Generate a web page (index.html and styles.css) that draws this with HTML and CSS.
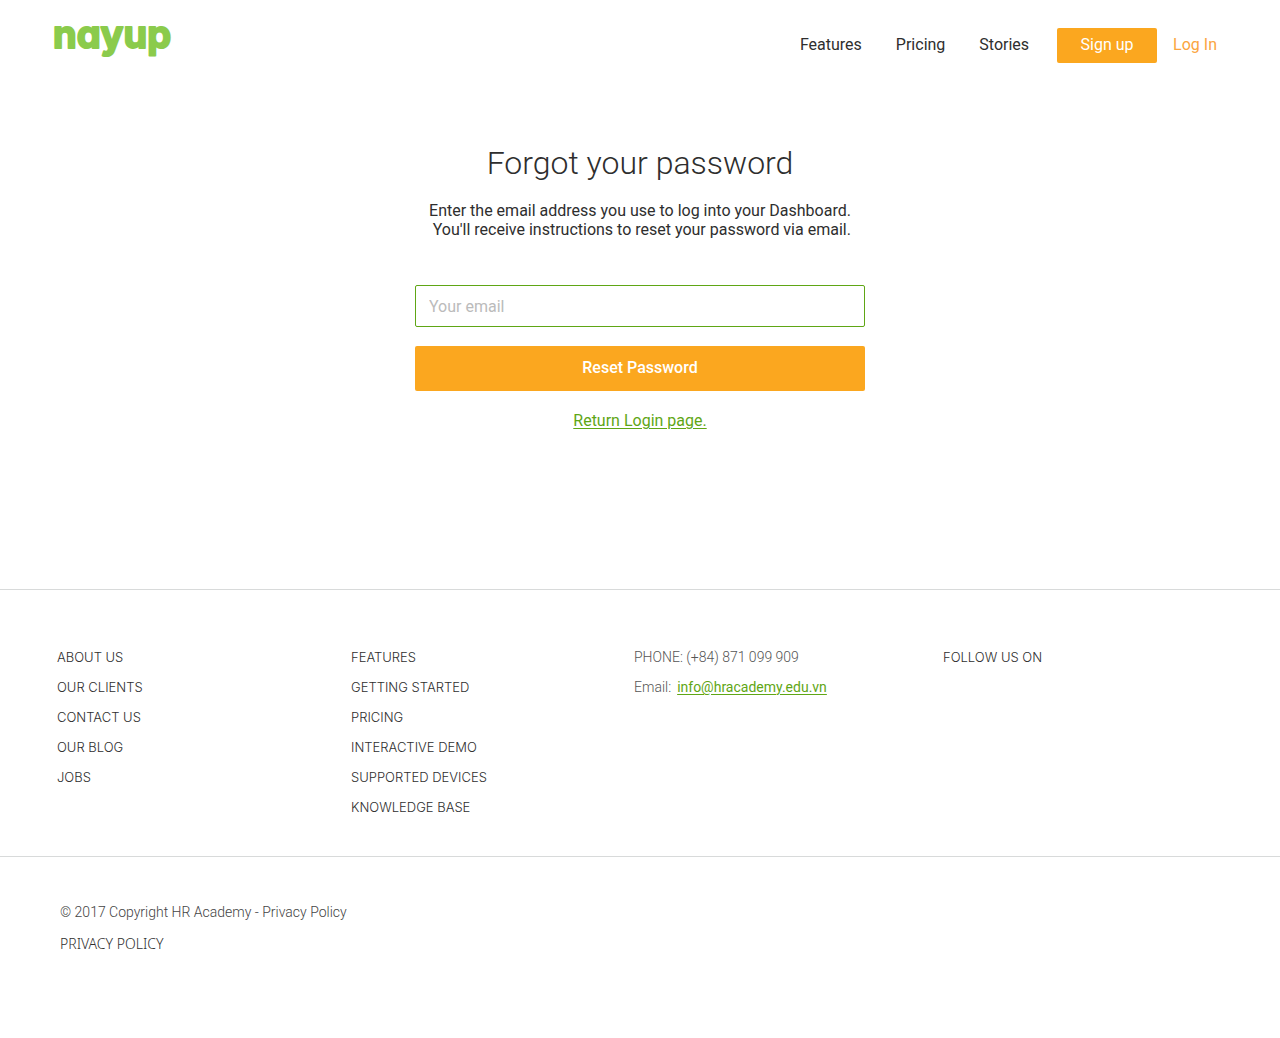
FILE: index.html
```html
<!DOCTYPE html>
<html lang="en">
<head>
<meta charset="utf-8">
<meta name="viewport" content="width=device-width, initial-scale=1">
<title>Forgot your password</title>
<link rel="stylesheet" href="styles.css">
</head>
<body>
<header class="header">
  <a class="logo" href="#">
    <svg class="logo-mark" viewBox="0 0 122 40" width="122" height="40"><text class="logo-word" x="1" y="26">nayup</text></svg>
  </a>
  <nav class="nav">
    <div class="nav-links">
      <a class="nav-link" href="#">Features</a>
      <a class="nav-link" href="#">Pricing</a>
      <a class="nav-link" href="#">Stories</a>
    </div>
    <button class="button signup" type="button">Sign up</button>
    <a class="login" href="#">Log In</a>
  </nav>
</header>
<main class="main">
  <h1 class="title">Forgot your password</h1>
  <p class="intro">Enter the email address you use to log into your Dashboard.<br>You'll receive instructions to reset your password via email.</p>
  <form class="form">
    <input class="email" type="email" placeholder="Your email" aria-label="Your email">
    <button class="button reset" type="button">Reset Password</button>
  </form>
  <a class="green-link" href="#">Return Login page.</a>
</main>
<footer>
  <div class="footer-columns">
    <ul class="list">
      <li><a href="#">ABOUT US</a></li>
      <li><a href="#">OUR CLIENTS</a></li>
      <li><a href="#">CONTACT US</a></li>
      <li><a href="#">OUR BLOG</a></li>
      <li><a href="#">JOBS</a></li>
    </ul>
    <ul class="list">
      <li><a href="#">FEATURES</a></li>
      <li><a href="#">GETTING STARTED</a></li>
      <li><a href="#">PRICING</a></li>
      <li><a href="#">INTERACTIVE DEMO</a></li>
      <li><a href="#">SUPPORTED DEVICES</a></li>
      <li><a href="#">KNOWLEDGE BASE</a></li>
    </ul>
    <address class="contact">
      <p>PHONE: (+84) 871 099 909</p>
      <p class="contact-row">Email: <a class="green-link" href="#">info@hracademy.edu.vn</a></p>
    </address>
    <h2 class="follow">FOLLOW US ON</h2>
  </div>
  <div class="legal">
    <p class="copyright">© 2017 Copyright HR Academy - Privacy Policy</p>
    <a class="privacy" href="#">PRIVACY POLICY</a>
  </div>
</footer>
</body>
</html>
```
FILE: styles.css
```css
* { box-sizing: border-box; }
body {
  margin: 0;
  background: #fff;
  color: #2e2e2e;
  font: 16px/19px Roboto, sans-serif;
}
a { color: inherit; text-decoration: none; }
h1, h2, p, ul { margin: 0; padding: 0; font-weight: 300; }
ul { list-style: none; }
.header {
  display: flex;
  justify-content: space-between;
  align-items: flex-start;
  padding: 22px 63px 0 52px;
}
.logo-mark { display: block; overflow: visible; }
.logo-word {
  font: 700 38px Inter, sans-serif;
  font-feature-settings: "cv11";
  fill: #8bcb4c;
  stroke: #8bcb4c;
  stroke-width: 2px;
  stroke-linejoin: round;
}
.nav { display: flex; align-items: center; gap: 16px; padding-top: 6px; }
.nav-links { display: flex; gap: 34px; margin-right: 12px; }
.nav-link, .login { padding-bottom: 2px; }
.button {
  border: 0;
  border-radius: 2px;
  background: #fba71f;
  color: #fff;
  font: 16px/19px Roboto, sans-serif;
}
.signup { width: 100px; height: 35px; padding: 0 0 2px; }
.login { color: #fba540; }
.main {
  display: flex;
  flex-direction: column;
  align-items: center;
  padding: 80px 20px 159px;
}
.title { font-size: 32px; line-height: 40px; }
.intro { margin-top: 18px; text-align: right; font-weight: 400; }
.form { display: grid; gap: 19px; width: 100%; max-width: 450px; margin: 46px 0 20px; }
.email {
  width: 100%;
  height: 42px;
  padding: 0 13px;
  border: 1px solid #5fa615;
  border-radius: 2px;
  background: #fff;
  font: 16px/19px Roboto, sans-serif;
}
.email::placeholder { color: #bbb; }
.reset { height: 45px; padding: 0 0 2px; font-weight: 500; }
.green-link { color: #5fa615; text-decoration: underline; text-decoration-thickness: 1px; text-underline-offset: 2px; }
.footer-columns {
  display: grid;
  grid-template-columns: 294fr 283fr 309fr 280fr;
  padding: 52px 57px 34px;
  border-top: 1px solid #d8dada;
  border-bottom: 1px solid #d8dada;
}
.list, .follow { font: 300 13px/30px Inter, sans-serif; }
.contact { font: 300 14px/30px Roboto, sans-serif; color: #555; }
.contact-row { display: flex; gap: 6px; }
.contact-row .green-link { font-weight: 400; }
.legal { padding: 40px 60px; font-size: 14px; line-height: 31px; }
.copyright { color: #444; }
.privacy { font-family: "Noto Sans", sans-serif; font-weight: 300; }
```
